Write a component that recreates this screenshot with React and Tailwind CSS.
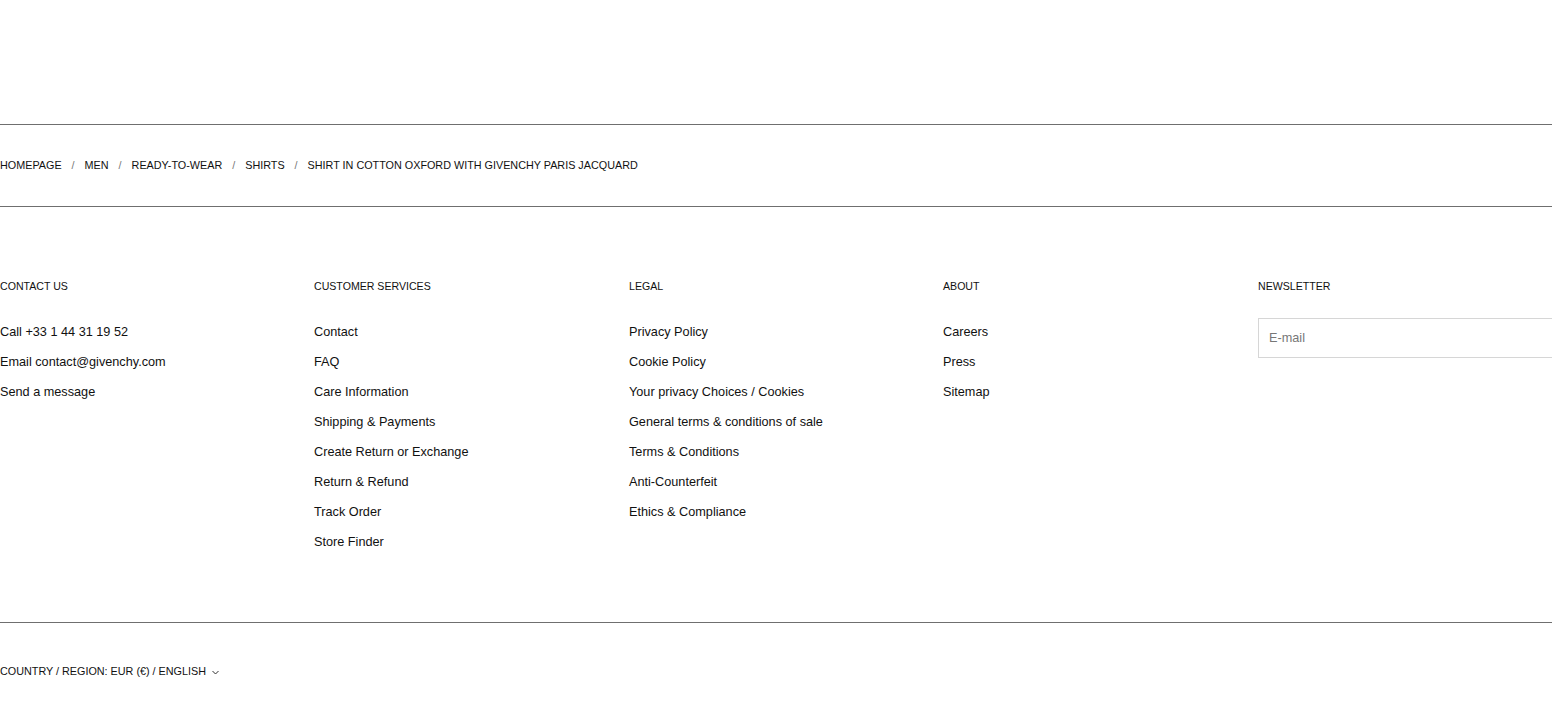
import React from 'react';

const crumbs = ['Homepage', 'Men', 'Ready-to-wear', 'Shirts', 'Shirt in cotton oxford with GIVENCHY Paris jacquard'];

const columns = [
    { title: 'Contact us', links: ['Call +33 1 44 31 19 52', 'Email contact@givenchy.com', 'Send a message'] },
    { title: 'Customer services', links: ['Contact', 'FAQ', 'Care Information', 'Shipping & Payments', 'Create Return or Exchange', 'Return & Refund', 'Track Order', 'Store Finder'] },
    { title: 'Legal', links: ['Privacy Policy', 'Cookie Policy', 'Your privacy Choices / Cookies', 'General terms & conditions of sale', 'Terms & Conditions', 'Anti-Counterfeit', 'Ethics & Compliance'] },
    { title: 'About', links: ['Careers', 'Press', 'Sitemap'] },
];

export default function App() {
    return (
        <div className="w-[1552px] h-[725px] overflow-hidden bg-white text-[#111]" style={{ fontFamily: '"Liberation Sans", Arial, sans-serif' }}>
            <div className="h-[124px]" />

            {/* Breadcrumb */}
            <nav className="border-t border-b border-[#6f6f6f] h-[83px] flex items-center text-[10.8px] uppercase">
                {crumbs.map((c, i) => (
                    <React.Fragment key={i}>
                        {i > 0 && <span className="mx-[10px] text-[#777]">/</span>}
                        <span>{c}</span>
                    </React.Fragment>
                ))}
            </nav>

            {/* Footer columns */}
            <footer className="pt-[72px] h-[416px] border-b border-[#6f6f6f] grid grid-cols-[314px_315px_314px_315px_1fr]">
                {columns.map((col) => (
                    <div key={col.title}>
                        <h3 className="text-[10.6px] uppercase leading-[14px] mb-[24px]">{col.title}</h3>
                        <ul className="flex flex-col">
                            {col.links.map((l) => (
                                <li key={l} className="text-[12.7px] leading-[30px]">{l}</li>
                            ))}
                        </ul>
                    </div>
                ))}
                <div>
                    <h3 className="text-[10.6px] uppercase leading-[14px] mb-[25px]">Newsletter</h3>
                    <input
                        type="text"
                        placeholder="E-mail"
                        className="w-[320px] h-[40px] border border-[#d6d6d6] px-[10px] text-[12.7px] placeholder:text-[#777] outline-none"
                    />
                </div>
            </footer>

            {/* Locale */}
            <div className="h-[97px] flex items-center text-[10.8px] uppercase">
                <span>Country / Region: EUR (€) / English</span>
                <svg className="ml-[6px] mt-[2px]" width="7" height="5" viewBox="0 0 7 5" fill="none" stroke="#333" strokeWidth="1">
                    <path d="M0.5 1l3 3 3-3" />
                </svg>
            </div>
        </div>
    );
}
